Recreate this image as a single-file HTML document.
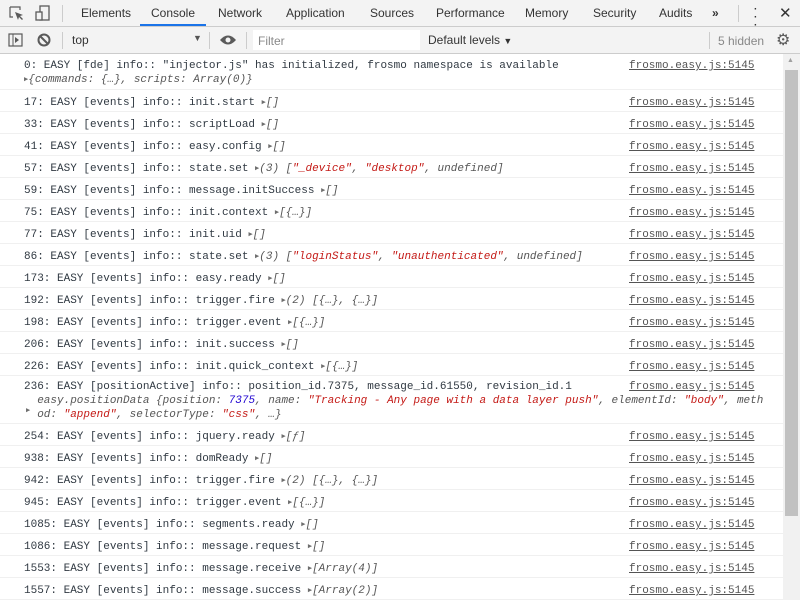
<!DOCTYPE html>
<html><head><meta charset="utf-8"><style>
*{margin:0;padding:0;box-sizing:border-box}
body{width:800px;height:600px;overflow:hidden;background:#fff;font-family:"Liberation Sans",sans-serif;position:relative}
.tabs{position:absolute;left:0;top:0;width:800px;height:27px;background:#f3f3f3;border-bottom:1px solid #ccc}
.tab{position:absolute;top:0;height:26px;line-height:27px;font-size:12px;color:#333}
.act{border-bottom:2px solid #1a73e8}
.tb{position:absolute;left:0;top:27px;width:800px;height:27px;background:#f3f3f3;border-bottom:1px solid #ccc;font-size:12px;color:#333}
.sep{position:absolute;width:1px;background:#ccc}
.con{position:absolute;left:0;top:54px;width:783px;font-family:"Liberation Mono",monospace;font-size:11px;color:#303942}
.r{position:relative;height:22px;overflow:hidden;padding:6px 0 0 24px;line-height:14px;border-bottom:1px solid #f0f0f0;white-space:pre}
.l{position:absolute;left:629px;top:6px;color:#545454;text-decoration:underline}
.t{font-size:7px;color:#6e6e6e;vertical-align:1px}
i{color:#565656}
.s{color:#c41a16}.n{color:#1c00cf}
.sb{position:absolute;left:783px;top:54px;width:17px;height:546px;background:#f1f1f1}
.th{position:absolute;left:785px;top:70px;width:13px;height:446px;background:#c1c1c1}
</style></head><body>
<div class="tabs">
<svg style="position:absolute;left:9px;top:6px" width="16" height="16"><path d="M1 1h10v3M1 1v10h3" fill="none" stroke="#5a5a5a" stroke-width="1.2"/><path d="M6 6l8 3-3 1 3 3-1 1-3-3-1 3z" fill="#5a5a5a"/></svg>
<svg style="position:absolute;left:35px;top:5px" width="16" height="17"><rect x="5" y="1" width="9" height="14" fill="none" stroke="#5a5a5a" stroke-width="1.3"/><rect x="1" y="7" width="6" height="8" fill="#f3f3f3" stroke="#5a5a5a" stroke-width="1.3"/></svg>
<div class="sep" style="left:62px;top:5px;height:17px"></div>
<div class="tab" style="left:81px">Elements</div>
<div class="tab act" style="left:140px;width:66px;text-align:center">Console</div>
<div class="tab" style="left:218px">Network</div>
<div class="tab" style="left:286px">Application</div>
<div class="tab" style="left:370px">Sources</div>
<div class="tab" style="left:436px">Performance</div>
<div class="tab" style="left:525px">Memory</div>
<div class="tab" style="left:593px">Security</div>
<div class="tab" style="left:659px">Audits</div>
<div class="tab" style="left:712px;font-weight:bold">»</div>
<div class="sep" style="left:738px;top:5px;height:17px"></div>
<div class="tab" style="left:754px;font-weight:bold;line-height:8px;top:6px;font-size:10px">·<br>·<br>·</div>
<div class="tab" style="left:779px;font-size:15px">✕</div>
</div>
<div class="tb">
<svg style="position:absolute;left:8px;top:6px" width="16" height="15"><rect x="1" y="1" width="13" height="12" fill="none" stroke="#5a5a5a" stroke-width="1.2"/><line x1="5" y1="1" x2="5" y2="13" stroke="#5a5a5a"/><path d="M7 4l4 3-4 3z" fill="#5a5a5a"/></svg>
<svg style="position:absolute;left:37px;top:6px" width="15" height="15"><circle cx="7" cy="7" r="5.5" fill="none" stroke="#5a5a5a" stroke-width="2"/><line x1="3" y1="3" x2="11" y2="11" stroke="#5a5a5a" stroke-width="2"/></svg>
<div class="sep" style="left:62px;top:5px;height:17px"></div>
<div style="position:absolute;left:72px;top:6px">top</div>
<div style="position:absolute;left:193px;top:6px;font-size:9px;color:#555">▼</div>
<div class="sep" style="left:209px;top:5px;height:17px"></div>
<svg style="position:absolute;left:219px;top:7px" width="18" height="12"><path d="M1 6q8-9 16 0q-8 9-16 0z" fill="#5a5a5a"/><circle cx="9" cy="6" r="2.5" fill="#f3f3f3"/></svg>
<div class="sep" style="left:246px;top:5px;height:17px"></div>
<div style="position:absolute;left:253px;top:3px;width:167px;height:20px;background:#fff;color:#888;padding:4px 0 0 5px">Filter</div>
<div style="position:absolute;left:428px;top:6px">Default levels <span style="font-size:9px">▼</span></div>
<div class="sep" style="left:709px;top:5px;height:17px"></div>
<div style="position:absolute;left:718px;top:7px;color:#888">5 hidden</div>
<div style="position:absolute;left:776px;top:3px;font-size:16px;color:#5a5a5a">⚙</div>
</div>
<div class="con">
<div class="r" style="height:36px;padding-top:5px">0: EASY [fde] info:: "injector.js" has initialized, frosmo namespace is available
<span class="t">▶</span><i>{commands: {…}, scripts: Array(0)}</i><span class="l" style="top:5px">frosmo.easy.js:5145</span></div>
<div class="r">17: EASY [events] info:: init.start <span class="t">▶</span><i>[]</i><span class="l">frosmo.easy.js:5145</span></div>
<div class="r">33: EASY [events] info:: scriptLoad <span class="t">▶</span><i>[]</i><span class="l">frosmo.easy.js:5145</span></div>
<div class="r">41: EASY [events] info:: easy.config <span class="t">▶</span><i>[]</i><span class="l">frosmo.easy.js:5145</span></div>
<div class="r">57: EASY [events] info:: state.set <span class="t">▶</span><i>(3) [<span class="s">"_device"</span>, <span class="s">"desktop"</span>, undefined]</i><span class="l">frosmo.easy.js:5145</span></div>
<div class="r">59: EASY [events] info:: message.initSuccess <span class="t">▶</span><i>[]</i><span class="l">frosmo.easy.js:5145</span></div>
<div class="r">75: EASY [events] info:: init.context <span class="t">▶</span><i>[{…}]</i><span class="l">frosmo.easy.js:5145</span></div>
<div class="r">77: EASY [events] info:: init.uid <span class="t">▶</span><i>[]</i><span class="l">frosmo.easy.js:5145</span></div>
<div class="r">86: EASY [events] info:: state.set <span class="t">▶</span><i>(3) [<span class="s">"loginStatus"</span>, <span class="s">"unauthenticated"</span>, undefined]</i><span class="l">frosmo.easy.js:5145</span></div>
<div class="r">173: EASY [events] info:: easy.ready <span class="t">▶</span><i>[]</i><span class="l">frosmo.easy.js:5145</span></div>
<div class="r">192: EASY [events] info:: trigger.fire <span class="t">▶</span><i>(2) [{…}, {…}]</i><span class="l">frosmo.easy.js:5145</span></div>
<div class="r">198: EASY [events] info:: trigger.event <span class="t">▶</span><i>[{…}]</i><span class="l">frosmo.easy.js:5145</span></div>
<div class="r">206: EASY [events] info:: init.success <span class="t">▶</span><i>[]</i><span class="l">frosmo.easy.js:5145</span></div>
<div class="r">226: EASY [events] info:: init.quick_context <span class="t">▶</span><i>[{…}]</i><span class="l">frosmo.easy.js:5145</span></div>
<div class="r" style="height:48px;padding-top:4px">236: EASY [positionActive] info:: position_id.7375, message_id.61550, revision_id.1
  <i>easy.positionData {position: <span class="n">7375</span>, name: <span class="s">"Tracking - Any page with a data layer push"</span>, elementId: <span class="s">"body"</span>, meth</i>
  <i>od: <span class="s">"append"</span>, selectorType: <span class="s">"css"</span>, …}</i><span class="t" style="position:absolute;left:26px;top:28px">▶</span><span class="l" style="top:4px">frosmo.easy.js:5145</span></div>
<div class="r">254: EASY [events] info:: jquery.ready <span class="t">▶</span><i>[ƒ]</i><span class="l">frosmo.easy.js:5145</span></div>
<div class="r">938: EASY [events] info:: domReady <span class="t">▶</span><i>[]</i><span class="l">frosmo.easy.js:5145</span></div>
<div class="r">942: EASY [events] info:: trigger.fire <span class="t">▶</span><i>(2) [{…}, {…}]</i><span class="l">frosmo.easy.js:5145</span></div>
<div class="r">945: EASY [events] info:: trigger.event <span class="t">▶</span><i>[{…}]</i><span class="l">frosmo.easy.js:5145</span></div>
<div class="r">1085: EASY [events] info:: segments.ready <span class="t">▶</span><i>[]</i><span class="l">frosmo.easy.js:5145</span></div>
<div class="r">1086: EASY [events] info:: message.request <span class="t">▶</span><i>[]</i><span class="l">frosmo.easy.js:5145</span></div>
<div class="r">1553: EASY [events] info:: message.receive <span class="t">▶</span><i>[Array(4)]</i><span class="l">frosmo.easy.js:5145</span></div>
<div class="r">1557: EASY [events] info:: message.success <span class="t">▶</span><i>[Array(2)]</i><span class="l">frosmo.easy.js:5145</span></div>
</div>
<div class="sb"></div><div class="th"></div>
<div style="position:absolute;left:787px;top:57px;font-size:7px;color:#a0a0a0">▲</div>
</body></html>
